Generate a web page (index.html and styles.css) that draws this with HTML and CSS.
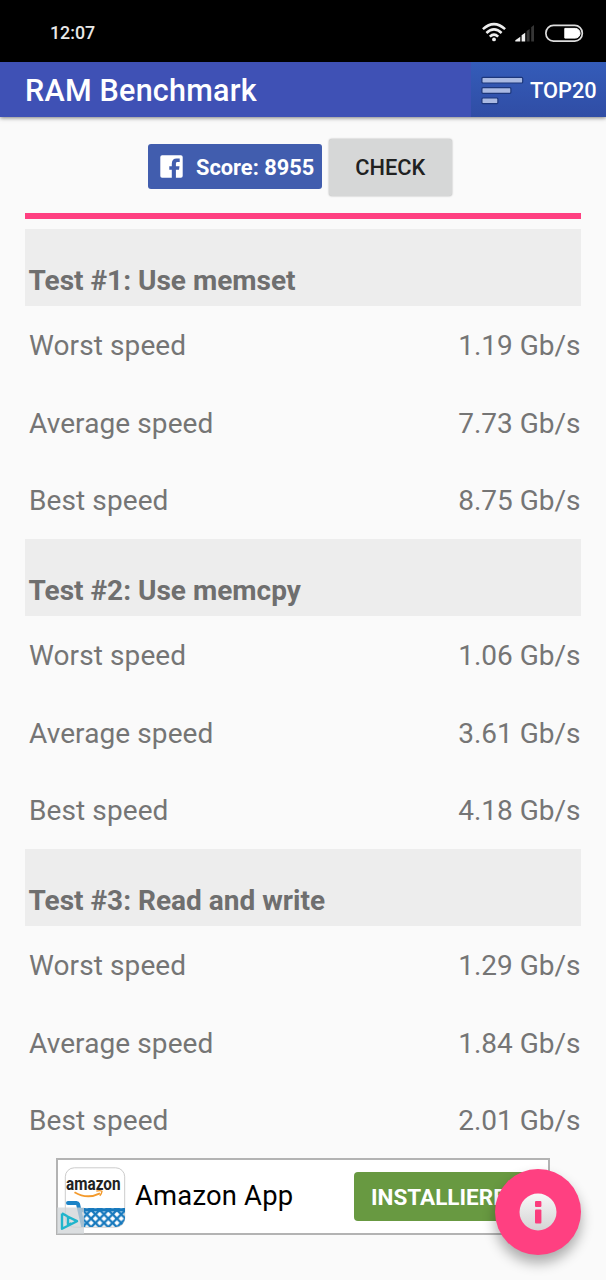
FILE: index.html
```html
<!DOCTYPE html>
<html lang="en">
<head>
<meta charset="utf-8">
<title>RAM Benchmark</title>
<link rel="stylesheet" href="styles.css">
</head>
<body>
<div class="screen">
  <header class="status">
    <span class="clock">12:07</span>
    <svg class="status-icons" width="104" height="22" viewBox="0 0 104 22">
      <g fill="none" stroke="#eee" stroke-width="2.5">
        <path d="M.9 7.2Q12-3 23.1 7.2"/>
        <path d="M4.4 11Q12 3.8 19.6 11"/>
        <path d="M7.8 14.6Q12 10.6 16.2 14.6"/>
      </g>
      <circle cx="12" cy="17.4" r="1.9" fill="#eee"/>
      <path d="M33.3 19.4v-1.2l5-3.4v4.6zM39.6 19.4v-6.2l3.6-2.5v8.7z" fill="#eee"/>
      <path d="M44.6 19.4V9.1l3-2.2v12.5zM49.2 19.4V5.2l2.8-2.2v16.4z" fill="#363636"/>
      <rect x="63.9" y="3.3" width="36.4" height="15.8" rx="7.6" fill="none" stroke="#ddd" stroke-width="1.7"/>
      <path d="M82.8 6.4h10.4a4.8 4.8 0 0 1 0 9.7H82.8z" fill="#fff" stroke="#fff"/>
    </svg>
  </header>
  <div class="toolbar">
    <h1 class="title">RAM Benchmark</h1>
    <div class="top20">
      <svg width="43" height="30" viewBox="0 0 43 30" fill="#a9b9e2" stroke="#1d377b" stroke-width="1.2">
        <rect x=".9" y="2.4" width="40.8" height="5.6" rx="1"/>
        <rect x=".9" y="12.7" width="29" height="5.6" rx="1"/>
        <rect x=".9" y="23" width="16" height="5.6" rx="1"/>
      </svg>
      <span class="top20-label">TOP20</span>
    </div>
  </div>
  <div class="actions">
    <div class="share">
      <svg width="23" height="23" viewBox="0 0 23 23">
        <rect x=".3" y=".3" width="22.4" height="22.4" rx="1.8" fill="#fff"/>
        <path d="M11.8 23v-8.2H9.3v-3.6h2.5V8.8c0-3.4 1.8-5.3 4.9-5.3h3v3.6h-2c-1.4 0-1.8.6-1.8 1.8v2.3h3.6l-.5 3.6h-3.1V23z" fill="#415dae"/>
      </svg>
      <span class="share-label">Score: 8955</span>
    </div>
    <div class="check"><span>CHECK</span></div>
  </div>
  <main class="results">
    <div class="divider"></div>
    <section>
      <h2 class="group"><span>Test #1: Use memset</span></h2>
      <div class="row"><span>Worst speed</span><span class="value">1.19 Gb/s</span></div>
      <div class="row"><span>Average speed</span><span class="value">7.73 Gb/s</span></div>
      <div class="row"><span>Best speed</span><span class="value">8.75 Gb/s</span></div>
    </section>
    <section>
      <h2 class="group"><span>Test #2: Use memcpy</span></h2>
      <div class="row"><span>Worst speed</span><span class="value">1.06 Gb/s</span></div>
      <div class="row"><span>Average speed</span><span class="value">3.61 Gb/s</span></div>
      <div class="row"><span>Best speed</span><span class="value">4.18 Gb/s</span></div>
    </section>
    <section>
      <h2 class="group"><span>Test #3: Read and write</span></h2>
      <div class="row"><span>Worst speed</span><span class="value">1.29 Gb/s</span></div>
      <div class="row"><span>Average speed</span><span class="value">1.84 Gb/s</span></div>
      <div class="row"><span>Best speed</span><span class="value">2.01 Gb/s</span></div>
    </section>
  </main>
  <div class="ad">
    <svg class="ad-art" width="70" height="74" viewBox="57 1160 70 74">
      <defs>
        <clipPath id="tile"><rect x="65" y="1168" width="60" height="59" rx="9"/></clipPath>
        <pattern id="mesh" x="82.5" y="1210" width="8.6" height="8.6" patternUnits="userSpaceOnUse">
          <path d="M-1-1l10.6 10.6M9.6-1L-1 9.6" stroke="#1779bd" stroke-width="2.3"/>
        </pattern>
      </defs>
      <rect x="65.3" y="1167.8" width="59.4" height="59.4" rx="9" fill="#fff" stroke="#ccc"/>
      <g clip-path="url(#tile)">
        <path d="M79 1208h46v20H82z" fill="url(#mesh)"/>
        <path d="M78 1208.2h47v3.3H79z" fill="#1779bd"/>
        <path d="M68 1203h8.5q1.2 0 1.6 1.2L83.5 1228" fill="none" stroke="#1c83c6" stroke-width="4" stroke-linecap="round"/>
      </g>
      <text class="ad-brand" x="66" y="1190.2" textLength="54.5" lengthAdjust="spacingAndGlyphs">amazon</text>
      <path d="M74.5 1192.2Q87 1199.8 100 1193.4" fill="none" stroke="#f39a2d" stroke-width="1.9"/>
      <path d="M96.3 1191.2q4-1.2 5.7.1-.2 2.3-2.2 4.5" fill="none" stroke="#f39a2d" stroke-width="1.4"/>
      <rect x="57" y="1207.5" width="27" height="26.5" fill="#cfd3d5" fill-opacity=".75"/>
      <path d="M62 1213.4v15.4l15-7.6-10.5-5.2M62 1213.4l5 2.6M68 1217.5v7.4l3.5-1.6" fill="none" stroke="#20b5cc" stroke-width="2.4" stroke-linejoin="round"/>
    </svg>
    <span class="ad-name">Amazon App</span>
    <div class="install"><span>INSTALLIEREN</span></div>
  </div>
  <div class="fab">
    <svg width="38" height="38" viewBox="0 0 38 38">
      <defs><linearGradient id="silver" x1="0" y1="0" x2="0" y2="1"><stop offset="0" stop-color="#f8f8f8"/><stop offset="1" stop-color="#d4d4d4"/></linearGradient></defs>
      <circle cx="19" cy="19" r="18.5" fill="url(#silver)"/>
      <rect x="16" y="8" width="6.4" height="6" rx="1" fill="#fb3d7d"/>
      <rect x="16" y="16.5" width="6.4" height="14" rx="1" fill="#fb3d7d"/>
    </svg>
  </div>
</div>
</body>
</html>
```

FILE: styles.css
```css
* { box-sizing: border-box; }
body { margin: 0; background: #fafafa; font-family: Roboto, "Liberation Sans", sans-serif; }
.screen { position: relative; height: 1280px; overflow: hidden; display: flex; flex-direction: column; white-space: nowrap; }
.status { flex: none; height: 62px; background: #000; display: flex; justify-content: space-between; align-items: flex-start; padding: 22px 20px 0 50px; }
.clock { color: #e8e8e8; font-size: 17.8px; font-weight: 500; line-height: 22px; }
.status-icons { flex: none; }
.toolbar { flex: none; height: 55px; background: #3f51b5; display: flex; justify-content: space-between; box-shadow: 0 1px 4px rgba(0,0,0,.5); }
.title { margin: 0 0 0 25px; color: #fff; font-size: 30.5px; letter-spacing: .23px; font-weight: 500; line-height: 58px; }
.top20 { width: 135px; background: linear-gradient(#345cb9, #304da5); display: flex; align-items: center; gap: 6px; padding: 0 0 0 10px; }
.top20 svg { flex: none; }
.top20-label { color: #fff; font-size: 21.8px; font-weight: 500; line-height: 30px; padding-top: 2px; }
.actions { flex: none; height: 95.5px; display: flex; align-items: flex-start; gap: 6.5px; padding: 21px 0 0 148px; }
.share { width: 174px; height: 45.5px; margin-top: 5.5px; border-radius: 3px; background: #415dae; color: #fff; display: flex; align-items: center; padding-left: 12px; gap: 13px; }
.share-label { font-size: 21.8px; font-weight: 700; padding-top: 2px; }
.check { width: 123.5px; height: 57px; margin-top: .6px; border-radius: 3px; background: #d6d7d7; box-shadow: 0 0 2px rgba(0,0,0,.35); color: #212121; font-size: 21.8px; font-weight: 500; display: flex; align-items: center; justify-content: center; padding-top: 1px; }
.results { flex: none; padding: 0 25px; color: #757575; font-size: 28px; }
.divider { height: 6.5px; margin-bottom: 9.5px; background: #ff4081; }
.group { margin: 0; height: 77.5px; padding: 26px 0 0 3.5px; background: #ededed; color: #6f6f6f; font-size: 28px; line-height: 52px; font-weight: 700; }
.row { height: 77.5px; display: flex; justify-content: space-between; padding: 1px .5px 0 4px; line-height: 77.5px; letter-spacing: .1px; }
.value { letter-spacing: 0; }
.ad { flex: none; width: 494px; height: 77px; margin: -.5px 0 0 56px; background: #fff; border: 2px solid #b3b3b3; display: flex; align-items: center; }
.ad-art { flex: none; margin-left: -1px; }
.ad-brand { font-family: Roboto, sans-serif; font-weight: 700; font-size: 18.5px; fill: #222; }
.ad-name { flex: none; width: 227px; padding: 0 0 2px 8px; color: #000; font-size: 27.4px; letter-spacing: .2px; }
.install { flex: none; width: 180px; height: 49px; background: #689941; border-radius: 4px; color: #fff; font-size: 22.5px; font-weight: 700; line-height: 50px; padding-left: 17px; }
.fab { position: absolute; left: 495px; top: 1169px; width: 86px; height: 86px; border-radius: 50%; background: #ff4081; box-shadow: 0 8px 13px rgba(0,0,0,.32); display: flex; align-items: center; justify-content: center; }
```
